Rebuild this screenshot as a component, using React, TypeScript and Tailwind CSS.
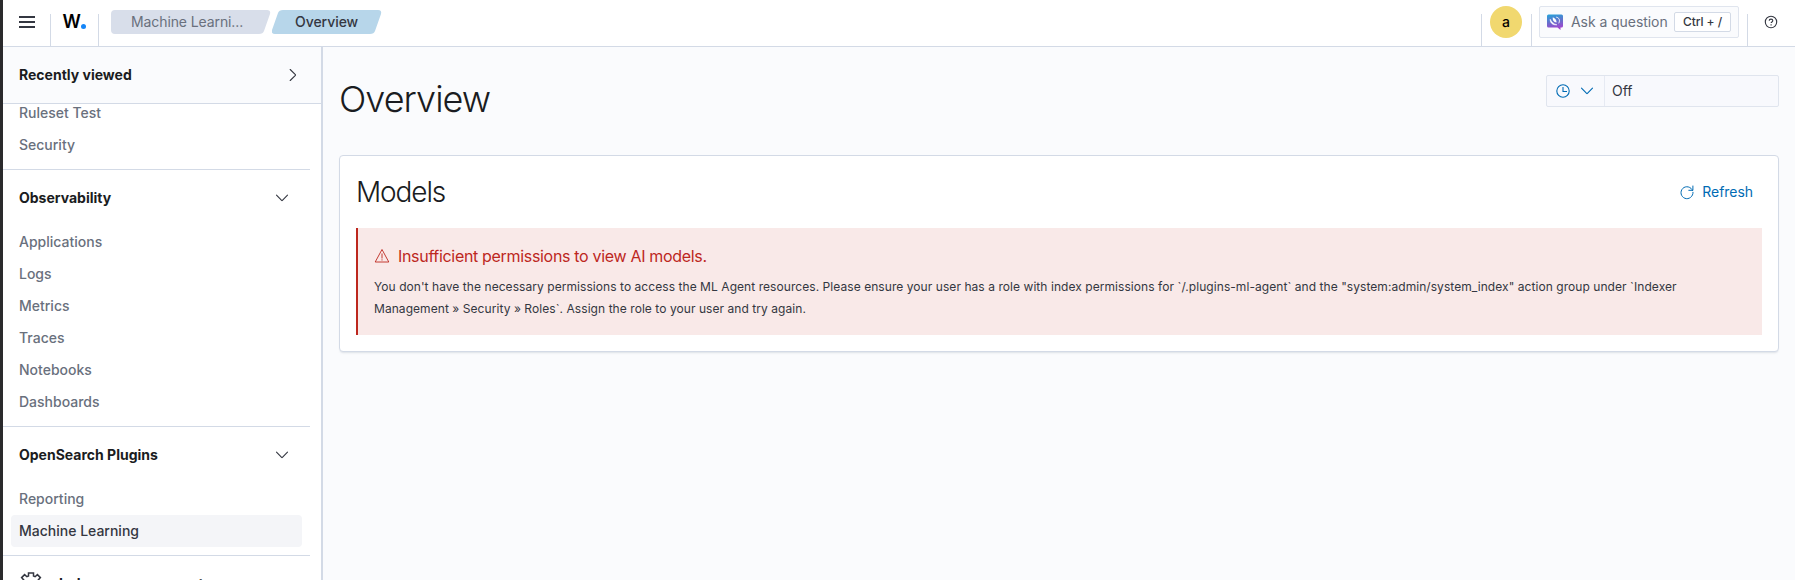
import React from 'react';

type NavItem = { label: string; active?: boolean };

function Chevron({ className }: { className?: string }) {
  return (
    <svg className={className} width="16" height="16" viewBox="0 0 16 16" fill="none" stroke="currentColor" strokeWidth="1.100" strokeLinecap="round" strokeLinejoin="round">
      <path d="M2.500 5.200 7.600 10.400a.6.6 0 0 0 .8 0L13.500 5.200" />
    </svg>
  );
}

function HeaderSeparator() {
  return <div className="h-8 w-px shrink-0 self-end bg-[#d3dae6]" />;
}

function AssistantIcon() {
  return (
    <svg width="16" height="16" viewBox="0 0 16 16">
      <defs>
        <linearGradient id="assistant" x1="0.3" y1="0" x2="0.5" y2="1">
          <stop offset="0" stopColor="#2a9fd8" />
          <stop offset="0.5" stopColor="#6a6ccb" />
          <stop offset="1" stopColor="#a93fd0" />
        </linearGradient>
      </defs>
      <path d="M1.500.5h13A1.500 1.500 0 0 1 16 2v10a1.500 1.500 0 0 1-1.500 1.500H13.500V16l-3-2.500h-9A1.500 1.500 0 0 1 0 12V2A1.500 1.500 0 0 1 1.500.5Z" fill="url(#assistant)" />
      <path d="M3.200 5.200c-.3 3.600 2.600 6.200 6.800 5.600-3-.5-5.300-2.500-6.800-5.600Z" fill="#fff" stroke="#fff" strokeWidth=".5" />
      <path d="M5.800 3.200c-.6 2.600.8 4.800 3.700 5.400.4-2.300-1.200-4.500-3.700-5.400Z" fill="#fff" />
      <path d="M9.600 3.200c2.600.5 3.700 3 2.300 5.800" fill="none" stroke="#fff" strokeWidth=".9" strokeLinecap="round" />
    </svg>
  );
}

function Header() {
  return (
    <header className="flex h-[47px] shrink-0 border-b border-[#d3dae6] bg-white">
      <button className="flex w-[47px] items-start pl-4" aria-label="Menu">
        <svg width="16" height="44" viewBox="0 0 16 44" fill="#343741">
          <path d="M0 16h16v2H0zM0 21h16v2H0zM0 26h16v2H0z" />
        </svg>
      </button>
      <HeaderSeparator />
      <div className="flex w-[47px] items-start justify-center pt-[10px] text-[18px] leading-6 font-semibold tracking-[-0.03em] text-black">
        <span>W</span>
        <span className="mt-[14px] ml-[1px] size-[5px] rounded-full bg-[#1485f8]" />
      </div>
      <HeaderSeparator />
      <nav className="ml-3 flex gap-[1px] pt-[10px] text-sm leading-6 font-medium">
        <a className="h-6 w-[160px] bg-[#d8deea] pl-5 font-normal tracking-[-0.1px] text-[#69707d] [clip-path:path('M4_0H156Q160_0_159_4L153_21Q152_24_148_24H4Q0_24_0_20V4Q0_0_4_0Z')]">Machine Learni...</a>
        <a className="h-6 w-[110px] bg-[#b7d6ea] pl-[23px] tracking-[-0.05px] text-[#343741] [clip-path:path('M11_0H106Q110_0_109_4L103_21Q102_24_98_24H3Q-1_24_0_20L6_3Q7_0_11_0Z')]">Overview</a>
      </nav>
      <div className="ml-auto flex">
        <HeaderSeparator />
        <div className="mt-[6px] mr-[9px] ml-2 size-8 rounded-full bg-[#f1d86f] text-center text-sm leading-8 font-medium text-black">a</div>
        <HeaderSeparator />
        <div className="mt-[6px] mr-2 ml-[7px] flex h-8 w-[200px] items-center rounded-[2px] border border-[#e0e5ee] bg-[#fafbfd] pl-[7px]">
          <AssistantIcon />
          <span className="ml-2 w-[103px] text-sm tracking-[-0.06px] whitespace-nowrap text-[#69707d]">Ask a question</span>
          <span className="flex h-5 w-[57px] items-center justify-center rounded-[2px] border border-[#d3dae6] bg-white text-xs font-medium tracking-[-0.05px] whitespace-nowrap text-[#343741]">Ctrl + /</span>
        </div>
        <HeaderSeparator />
        <div className="w-[47px] pt-[14px] pl-[15px]">
          <svg width="16" height="16" viewBox="0 0 16 16" fill="none" stroke="#343741" strokeWidth="1.100">
            <circle cx="8" cy="8" r="5.700" />
            <path d="M6.200 6.800c0-2.300 3.600-2.200 3.600-.1 0 1.200-1.700 1.300-1.700 2.400" />
            <path d="M8.100 10.200v1.200" />
          </svg>
        </div>
      </div>
    </header>
  );
}

function NavList({ items }: { items: NavItem[] }) {
  return (
    <ul className="pr-2 pl-2">
      {items.map((item) => (
        <li
          key={item.label}
          className={
            item.active
              ? 'h-8 rounded bg-[#f4f5f8] pl-2 leading-8 text-[#343741]'
              : 'h-8 pl-2 leading-8 text-[#69707d]'
          }
        >
          {item.label}
        </li>
      ))}
    </ul>
  );
}

function NavGroup({ title, items }: { title: string; items: NavItem[] }) {
  return (
    <section className="w-[307px] border-t border-[#d3dae6] pb-2">
      <h3 className="flex h-14 items-center justify-between pr-5 pl-4 font-bold text-[#1a1c21]">
        {title}
        <Chevron className="text-[#343741]" />
      </h3>
      <NavList items={items} />
    </section>
  );
}

function SideNav() {
  return (
    <aside className="flex w-80 shrink-0 flex-col overflow-hidden border-r-2 border-[#d3dae6] bg-white text-sm font-medium">
      <div className="flex h-[57px] shrink-0 items-center justify-between border-b border-[#d3dae6] bg-[#fafbfd] pr-5 pl-4 font-bold text-[#1a1c21]">
        Recently viewed
        <Chevron className="-rotate-90 text-[#343741]" />
      </div>
      <div className="flex min-h-0 flex-1 flex-col overflow-hidden">
        <div className="-mt-[7px] h-[72px] shrink-0">
          <NavList items={[{ label: 'Ruleset Test' }, { label: 'Security' }]} />
        </div>
        <NavGroup
          title="Observability"
          items={[
            { label: 'Applications' },
            { label: 'Logs' },
            { label: 'Metrics' },
            { label: 'Traces' },
            { label: 'Notebooks' },
            { label: 'Dashboards' },
          ]}
        />
        <NavGroup title="OpenSearch Plugins" items={[{ label: 'Reporting' }, { label: 'Machine Learning', active: true }]} />
        <div className="flex h-14 w-[307px] shrink-0 items-center border-t border-[#d3dae6] pl-4 font-bold text-[#1a1c21]">
          <svg width="24" height="24" viewBox="0 0 24 24" fill="none" stroke="#343741" strokeWidth="1.500">
            <path d="M9.500 1h5v3l1.600.7L18.400 2.600l3 3L19.300 8l.7 1.500H23v5h-3l-.7 1.500 2.100 2.400-3 3-2.300-2.100-1.600.7v3h-5v-3l-1.600-.7-2.300 2.100-3-3L4.700 16 4 14.500H1v-5h3L4.700 8 2.600 5.600l3-3 2.300 2.100L9.500 4Z" />
          </svg>
          <span className="ml-4">Indexer management</span>
        </div>
      </div>
    </aside>
  );
}

function DatePicker() {
  return (
    <div className="flex h-8 w-[233px] rounded-[2px] border border-[#e0e5ee] bg-[#f8f9fd] text-sm">
      <div className="flex w-[58px] items-center gap-2 border-r border-[#e6eaf3] pl-2 text-[#006bb4]">
        <svg width="16" height="16" viewBox="0 0 16 16" fill="none" stroke="currentColor" strokeWidth="1.100">
          <circle cx="8" cy="8" r="6.200" />
          <path d="M8 4v4.500h4" />
        </svg>
        <Chevron />
      </div>
      <span className="pl-[7px] leading-[30px] text-[#343741]">Off</span>
    </div>
  );
}

function ModelsPanel() {
  return (
    <section className="mt-12 h-[197px] rounded border border-[#d3dae6] bg-white px-4 shadow-[0_2px_2px_-1px_rgba(152,162,179,0.3)]">
      <div className="flex h-[72px] items-center justify-between pr-[9px]">
        <h2 className="text-[28px] leading-8 font-light tracking-[-0.04em] text-[#1a1c21]">Models</h2>
        <button className="flex items-center gap-[7px] text-sm tracking-[-0.05px] text-[#006bb4]">
          <svg width="16" height="16" viewBox="0 0 16 16" fill="none" stroke="currentColor" strokeLinecap="round">
            <path d="M13.600 6.500A6 6 0 1 0 14 8.300" />
            <path d="M13.900 2v4.300H9.800" />
          </svg>
          Refresh
        </button>
      </div>
      <div className="h-[107px] border-l-2 border-[#bd271e] bg-[#f9e9e8] px-4 pt-4">
        <h3 className="flex h-6 items-center text-base tracking-[-0.32px] text-[#bd271e]">
          <svg width="16" height="16" viewBox="0 0 16 16" fill="none" stroke="currentColor" strokeLinejoin="round" strokeWidth=".9">
            <path d="M8 1.500 14.800 14H1.200Z" />
            <path d="M8 5.500v5M8 11.300v1.200" />
          </svg>
          <span className="ml-2">Insufficient permissions to view AI models.</span>
        </h3>
        <p className="mt-2 text-xs leading-[21.500px] tracking-[0.06px] text-[#343741]">
          You don't have the necessary permissions to access the ML Agent resources. Please ensure your user has a role with index permissions for `/.plugins-ml-agent` and the "system:admin/system_index" action group under `Indexer
          <br />
          Management » Security » Roles`. Assign the role to your user and try again.
        </p>
      </div>
    </section>
  );
}

export default function App() {
  return (
    <div className="flex h-[580px] w-[1795px] overflow-hidden bg-[#fafbfd] font-['Inter',sans-serif]">
      <div className="w-[3px] shrink-0 bg-[#2a2a2c]" />
      <div className="flex min-w-0 flex-1 flex-col">
        <Header />
        <div className="flex min-h-0 flex-1">
          <SideNav />
          <main className="min-w-0 flex-1 px-4 pt-7">
            <div className="flex h-8 justify-between">
              <h1 className="pt-[5px] text-[36px] leading-[38px] font-light tracking-[-0.027em] text-[#1a1c21]">Overview</h1>
              <DatePicker />
            </div>
            <ModelsPanel />
          </main>
        </div>
      </div>
    </div>
  );
}
